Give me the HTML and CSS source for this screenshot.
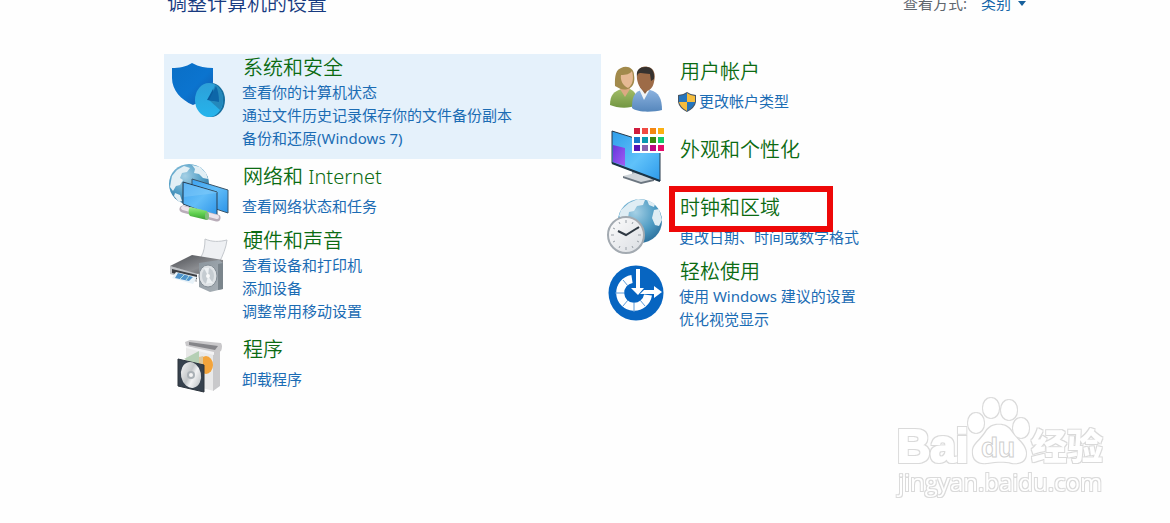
FILE: index.html
```html
<!DOCTYPE html>
<html lang="zh-CN">
<head>
<meta charset="utf-8">
<meta name="viewport" content="width=device-width, initial-scale=1">
<title>控制面板</title>
<link rel="stylesheet" href="styles.css">
</head>
<body>
<div class="page">
  <header class="header">
    <h1 class="heading">调整计算机的设置</h1>
    <div class="view-by">
      <label for="view">查看方式:</label>
      <span class="view-picker">
        <select id="view" class="view-select"><option>类别</option></select>
        <svg class="view-arrow" viewBox="0 0 8 5" aria-hidden="true"><path d="M0 0h8L4 5z" fill="#17609c"/></svg>
      </span>
    </div>
  </header>

  <main class="categories">
    <div class="column">
      <section class="item item-active">
        <svg class="icon" viewBox="0 0 68 68" aria-hidden="true">
          <defs>
            <linearGradient id="shield" x1="0" y1="0" x2="1" y2="1"><stop offset="0" stop-color="#0a6fc6"/><stop offset=".55" stop-color="#0b74cf"/><stop offset="1" stop-color="#1257a8"/></linearGradient>
            <linearGradient id="pie" x1="0" y1="0" x2="0" y2="1"><stop offset="0" stop-color="#2d9fd8"/><stop offset="1" stop-color="#25b4ec"/></linearGradient>
          </defs>
          <path d="M8 14c7 0 14-1 20-5 7 4 14 5 21 5v14c0 11-9 19-20 23C17 46 8 36 8 24z" fill="url(#shield)"/>
          <ellipse cx="47" cy="46" rx="14" ry="17" fill="#176f9f"/>
          <ellipse cx="45" cy="46" rx="14" ry="17" fill="url(#pie)"/>
          <path d="M45 46l6-15c5 3 8 8 8 14 0 4-1 8-3 11z" fill="#2488bb"/>
          <path d="M43 46l6-11 2 12z" fill="#0a5b9c"/><path d="M45 46l7-14c2 4 3 10 3 16z" fill="#0d66a8"/>
        </svg>
        <div class="text">
          <h2 class="title"><a href="#">系统和安全</a></h2>
          <ul class="links">
            <li><a href="#">查看你的计算机状态</a></li>
            <li><a href="#">通过文件历史记录保存你的文件备份副本</a></li>
            <li><a href="#">备份和还原(Windows 7)</a></li>
          </ul>
        </div>
      </section>

      <section class="item item-single">
        <svg class="icon" viewBox="0 0 68 68" aria-hidden="true">
          <defs>
            <radialGradient id="globe" cx=".4" cy=".3" r=".75"><stop offset="0" stop-color="#a5d0e5"/><stop offset=".6" stop-color="#4f9cc4"/><stop offset="1" stop-color="#2b6f9c"/></radialGradient>
            <linearGradient id="screen" x1="0" y1="0" x2="1" y2="1"><stop offset="0" stop-color="#3ea2f0"/><stop offset=".5" stop-color="#62bdf8"/><stop offset="1" stop-color="#2b93e8"/></linearGradient>
            <linearGradient id="plug" x1="0" y1="0" x2="0" y2="1"><stop offset="0" stop-color="#a2ec8c"/><stop offset=".5" stop-color="#5fd04f"/><stop offset="1" stop-color="#3a9c34"/></linearGradient>
          </defs>
          <circle cx="25" cy="25" r="20" fill="url(#globe)"/>
          <path d="M8 17l5-6 7-4 6 2-3 4-5 1-2 5 3 2-3 5-4 1-3 5-3-4 1-6zM28 6l8 2 6 6 2 6-5-1-4-4-5-1 1-4zM11 34l5 2 2 6-3 1-5-6z" fill="#e2eff5"/>
          <path d="M28 20l36 11v23l-36-12z" fill="url(#screen)" stroke="#3a5468"/>
          <path d="M19 23l34 10v25L19 45z" fill="url(#screen)" stroke="#283d50"/>
          <path d="M20 38l33-4v-1L20 24z" fill="#8dd0fb" opacity=".4"/>
          <path d="M19 50l34 9" stroke="#b9adb9" stroke-width="7" stroke-linecap="round"/>
          <path d="M19 49l34 9" stroke="#ece4ec" stroke-width="4" stroke-linecap="round"/>
          <path d="M26 48l17 4v9l-17-4q-3-5 0-9z" fill="url(#plug)"/>
          <ellipse cx="43" cy="57" rx="2" ry="4" fill="#83bd7d"/>
        </svg>
        <div class="text">
          <h2 class="title"><a href="#">网络和 Internet</a></h2>
          <ul class="links"><li><a href="#">查看网络状态和任务</a></li></ul>
        </div>
      </section>

      <section class="item">
        <svg class="icon" viewBox="0 0 68 68" aria-hidden="true">
          <defs>
            <linearGradient id="printer" x1="0" y1="0" x2="1" y2="1"><stop offset="0" stop-color="#4b4d52"/><stop offset=".6" stop-color="#8b8d91"/><stop offset="1" stop-color="#5c5e62"/></linearGradient>
            <linearGradient id="speaker" x1="0" y1="0" x2="1" y2="1"><stop offset="0" stop-color="#8b959d"/><stop offset="1" stop-color="#aab2b8"/></linearGradient>
          </defs>
          <path d="M41 12c7 3 14 3 22 1-1 8-4 15-8 23l-18-6c3-5 4-11 4-18z" fill="#eef0f3" stroke="#c3c7cc"/>
          <path d="M6 39l27 7v9L6 47z" fill="#c0c3c7"/>
          <path d="M6 39l22-11 31 5v5l-25 9z" fill="url(#printer)"/>
          <path d="M8 42l25 6v4L8 46z" fill="#3c3f44"/>
          <path d="M12 45l21 5-4 7-21-6z" fill="#e8f2f8"/><path d="M14 46l15 4-4 4-14-3z" fill="#4f93cb"/><path d="M20 48l-4 4M25 49l-3 4" stroke="#b5e0dc"/>
          <path d="M35 36l20-3 4 3v26l-13 3-11-5z" fill="url(#speaker)"/>
          <path d="M54 37l5-1v26l-5 1z" fill="#7b858c"/>
          <ellipse cx="44" cy="49" rx="9" ry="11" fill="#dfe3e6" stroke="#828c94"/>
          <ellipse cx="44" cy="49" rx="6" ry="8" fill="#c5ccd1"/><path d="M44 49l-4-8 5 0zM44 49l5 7-7 1z" fill="#edf1f3"/>
          <circle cx="44" cy="49" r="2" fill="#f8f9fa"/>
        </svg>
        <div class="text">
          <h2 class="title"><a href="#">硬件和声音</a></h2>
          <ul class="links">
            <li><a href="#">查看设备和打印机</a></li>
            <li><a href="#">添加设备</a></li>
            <li><a href="#">调整常用移动设置</a></li>
          </ul>
        </div>
      </section>

      <section class="item item-single">
        <svg class="icon" viewBox="0 0 68 68" aria-hidden="true">
          <defs><linearGradient id="disc" x1="0" y1="0" x2="1" y2="1"><stop offset="0" stop-color="#fafafa"/><stop offset=".45" stop-color="#c2c6c8"/><stop offset=".6" stop-color="#f2f3f4"/><stop offset="1" stop-color="#aeb4b8"/></linearGradient></defs>
          <path d="M22 14l28 7v38l-28-7z" fill="#e9e9e9"/>
          <path d="M49 21l7-3v36l-7 5z" fill="#c9c9cb"/>
          <path d="M21 10l5-2 31 3q2 3 0 8l-6 3-29-8z" fill="#c9c8ca"/>
          <path d="M25 10l29 4-3 4-26-5z" fill="#858589"/>
          <path d="M22 14l28 6v3l-28-7z" fill="#f3f3f4"/>
          <path d="M20 27l15-8v15z" fill="#b5cfb4"/><ellipse cx="42" cy="33" rx="7" ry="9" fill="#f3a43b"/><path d="M35 25l4-1v17h-4z" fill="#dcc69b"/>
          <path d="M14 27l26 6v27l-26-6z" fill="#36414d" stroke="#2c343d"/>
          <ellipse cx="27" cy="43" rx="10" ry="13" transform="rotate(-12 27 43)" fill="url(#disc)"/>
          <circle cx="27" cy="43" r="4" fill="#aab1b6"/><circle cx="27" cy="43" r="2" fill="#f5f5f5"/>
        </svg>
        <div class="text">
          <h2 class="title"><a href="#">程序</a></h2>
          <ul class="links"><li><a href="#">卸载程序</a></li></ul>
        </div>
      </section>
    </div>

    <div class="column">
      <section class="item item-single">
        <svg class="icon" viewBox="0 0 68 68" aria-hidden="true">
          <defs>
            <linearGradient id="green" x1="0" y1="0" x2="0" y2="1"><stop offset="0" stop-color="#a2bc68"/><stop offset="1" stop-color="#739743"/></linearGradient>
            <linearGradient id="blue" x1="0" y1="0" x2="0" y2="1"><stop offset="0" stop-color="#8cb2df"/><stop offset="1" stop-color="#5687bc"/></linearGradient>
          </defs>
          <path d="M9 51c0-10 4-14 12-16h8c6 3 7 7 7 16-8 4-20 3-27 0z" fill="url(#green)"/>
          <path d="M19 35l5 8 5-8-2-5h-6z" fill="#dca982"/>
          <path d="M14 32c0-4-1-16 6-18 6-3 13 0 13 7 1 5 0 11-4 13-6 3-10 1-15-2z" fill="#a28a4c"/>
          <path d="M20 21c5 0 9-1 11-4 2 7 1 14-4 17-5-2-8-8-7-13z" fill="#e5b993"/>
          <path d="M31 54c0-9 1-15 9-18h9c9 2 12 9 12 20-8 2-24 3-30-2z" fill="url(#blue)"/>
          <path d="M38 35l5 11 6-11-2-4h-7z" fill="#f0f3f5"/><path d="M39 33l5 7 5-7v-5h-9z" fill="#8d5e3b"/>
          <path d="M36 25c-1-10 5-14 11-12 6 1 8 7 6 15-1 6-5 9-8 9-5 0-8-6-9-12z" fill="#9d6b47"/>
          <path d="M36 22c-1-6 3-9 8-9 7-1 10 5 9 12l-3 2-1-7c-5 0-10-2-12 0z" fill="#36322f"/>
        </svg>
        <div class="text">
          <h2 class="title"><a href="#">用户帐户</a></h2>
          <ul class="links">
            <li><a class="admin-link" href="#"><svg class="uac" viewBox="0 0 20 20" aria-hidden="true"><path d="M1 3q5 0 9-3 4 3 9 3v7q-1 6-9 10-8-4-9-10z" fill="#475565"/><path d="M2 4q4 0 8-3v9H2z" fill="#2575bd"/><path d="M10 1q4 3 8 3v6h-8z" fill="#f5bd3d"/><path d="M2 10h8v9q-7-4-8-9z" fill="#f5bd3d"/><path d="M10 10h8q-1 5-8 9z" fill="#2575bd"/></svg>更改帐户类型</a></li>
          </ul>
        </div>
      </section>

      <section class="item item-plain">
        <svg class="icon" viewBox="0 0 68 68" aria-hidden="true">
          <defs>
            <linearGradient id="desk" x1="0" y1="0" x2="1" y2="1"><stop offset="0" stop-color="#2e9dea"/><stop offset=".55" stop-color="#60c2fa"/><stop offset="1" stop-color="#2d9aeb"/></linearGradient>
            <linearGradient id="violet" x1="0" y1="0" x2="1" y2="1"><stop offset="0" stop-color="#6636dc"/><stop offset="1" stop-color="#a15ef3"/></linearGradient>
          </defs>
          <path d="M31 48l9 3v6h-9z" fill="#9da8b1"/>
          <path d="M22 54l12-3 19 6-13 4z" fill="#cfd5da"/><path d="M22 54l18 6 13-3v2l-13 3-18-6z" fill="#6c7680"/>
          <path d="M11 9l48 15v35L11 41z" fill="url(#desk)" stroke="#26394a"/>
          <path d="M12 23l12 3v18l-12-4z" fill="url(#violet)"/>
          <path d="M11 41l48 18" stroke="#1b3447" stroke-width="2"/>
          <path d="M31 5h34v26H31z" fill="#fff"/>
          <path d="M33 6h6v6h-6z" fill="#d01c3d"/><path d="M41 6h6v6h-6z" fill="#f04a43"/><path d="M49 6h6v6h-6z" fill="#f48712"/><path d="M57 6h6v6h-6z" fill="#fbb012"/>
          <path d="M33 15h6v6h-6z" fill="#1777ca"/><path d="M41 15h6v6h-6z" fill="#0b99af"/><path d="M49 15h6v6h-6z" fill="#3c8710"/><path d="M57 15h6v6h-6z" fill="#13ca69"/>
          <path d="M33 23h6v6h-6z" fill="#5413b4"/><path d="M41 23h6v6h-6z" fill="#8965ae"/><path d="M49 23h6v6h-6z" fill="#be0781"/><path d="M57 23h6v6h-6z" fill="#e60c69"/>
        </svg>
        <div class="text"><h2 class="title"><a href="#">外观和个性化</a></h2></div>
      </section>

      <section class="item item-single item-marked">
        <svg class="icon" viewBox="0 0 68 68" aria-hidden="true">
          <defs><linearGradient id="face" x1="0" y1="0" x2="1" y2="1"><stop offset="0" stop-color="#fdfdfd"/><stop offset="1" stop-color="#d9dde2"/></linearGradient></defs>
          <circle cx="39" cy="31" r="22" fill="url(#globe)"/>
          <path d="M20 20l8-7 9-4 7 1-2 5-6 1-3 5-5 1-1 6-5 2-4-4zM46 10l8 4-1 3-5-2zM53 20l5-1 3 11-3 6-4-1-3-7z" fill="#dfedf4"/>
          <circle cx="25" cy="45" r="18" fill="url(#face)" stroke="#a3aab1" stroke-width="2"/>
          <path d="M25 30v3M25 57v3M10 45h3M37 45h3M32 32l-1 2M38 38l-2 1M38 52l-2-1M32 58l-1-2M18 58l1-2M12 52l2-1M12 38l2 1M18 32l1 2" stroke="#9aa1a8"/>
          <path d="M17 41l8 4 13-8" fill="none" stroke="#2f3943" stroke-width="2"/>
        </svg>
        <div class="text">
          <h2 class="title"><a href="#">时钟和区域</a></h2>
          <ul class="links"><li><a href="#">更改日期、时间或数字格式</a></li></ul>
        </div>
        <span class="marker"></span>
      </section>

      <section class="item">
        <svg class="icon" viewBox="0 0 68 68" aria-hidden="true">
          <circle cx="35" cy="35" r="27.500" fill="#0765c1"/>
          <path d="M31 21a14 14 0 1 0 16 16" fill="none" stroke="#fff" stroke-width="8"/>
          <path d="M22 22l5 6M14 35h9M22 48l5-6M33 54v-9M44 48l-5-6" stroke="#5c9bd8"/>
          <path d="M34 10h6v18h5L36 40 26 29h8z" fill="#0765c1"/>
          <path d="M35 11h4v19h4l-6 7-7-7h5z" fill="#fff"/>
          <path d="M39 36l4-4h10v-4l8 6-8 6v-4z" fill="#fff"/>
        </svg>
        <div class="text">
          <h2 class="title"><a href="#">轻松使用</a></h2>
          <ul class="links">
            <li><a href="#">使用 Windows 建议的设置</a></li>
            <li><a href="#">优化视觉显示</a></li>
          </ul>
        </div>
      </section>
    </div>
  </main>

  <svg class="watermark" viewBox="0 0 220 108" aria-label="Baidu 经验">
    <defs>
      <filter id="outline" x="-5%" y="-5%" width="110%" height="115%">
        <feMorphology in="SourceAlpha" operator="dilate" radius="1" result="grown"/>
        <feFlood flood-color="#dadada"/>
        <feComposite in2="grown" operator="in"/>
        <feMerge><feMergeNode/><feMergeNode in="SourceGraphic"/></feMerge>
      </filter>
    </defs>
    <g class="wm-shape" filter="url(#outline)">
      <text class="wm-bai" x="7" y="67">Bai</text>
      <ellipse cx="86" cy="28" rx="8" ry="10"/><ellipse cx="101" cy="13" rx="8" ry="10"/><ellipse cx="119" cy="15" rx="8" ry="10"/><ellipse cx="131" cy="33" rx="8" ry="10"/>
      <path d="M83 55c1-6 8-10 13-18 5-9 19-10 25-1 5 8 14 13 15 22 0 8-6 11-14 10-8-2-17-1-25 0-9 1-15-4-14-13z"/>
      <text class="wm-cn" x="141" y="65">经验</text>
      <text class="wm-url" x="8" y="96">jingyan.baidu.com</text>
    </g>
    <text class="wm-du" x="91" y="62">du</text>
  </svg>
</div>
</body>
</html>
```
FILE: styles.css
```css
* {
  box-sizing: border-box;
}

body {
  margin: 0;
  background: #fefefe;
  font-family: "Noto Sans", "Noto Sans CJK SC", sans-serif;
  font-size: 15px;
  line-height: 23px;
}

a {
  color: inherit;
  text-decoration: none;
}

a:hover {
  text-decoration: underline;
}

.page {
  position: relative;
  min-height: 100vh;
  padding-left: 164px;
  overflow: hidden;
}

.header {
  display: flex;
  align-items: center;
  justify-content: space-between;
  max-width: 874px;
  margin-top: -10px;
  padding: 0 12px 0 3px;
}

.heading {
  margin: 0;
  color: #173a80;
  font-size: 20px;
  font-weight: 350;
  line-height: 27px;
}

.view-by {
  display: flex;
  gap: 14px;
  color: #5f666d;
}

.view-picker {
  display: flex;
  align-items: center;
  gap: 6px;
}

.view-select {
  appearance: none;
  padding: 0;
  border: 0;
  background: none;
  color: #1565a8;
  font: inherit;
}

.view-arrow {
  width: 8px;
  height: 5px;
}

.categories {
  display: grid;
  grid-template-columns: 1fr 1fr;
  align-items: start;
  max-width: 874px;
  margin-top: 37px;
}

.item {
  position: relative;
  display: flex;
  align-items: flex-start;
  gap: 10px;
  padding-bottom: 9px;
}

.item-active {
  background: #e5f1fb;
}

.icon {
  flex: none;
  width: 68px;
  height: 68px;
  margin-bottom: -9px;
}

.title {
  margin: 0;
  padding-left: 1px;
  color: #0b6b12;
  font-size: 20px;
  font-weight: 350;
  line-height: 27px;
}

.links {
  margin: 0;
  padding: 0;
  color: #1b6cb4;
  list-style: none;
}

.item-single .text {
  padding-top: 4px;
}

.item-single .links {
  padding-top: 5px;
}

.item-plain .text {
  padding-top: 14px;
}

.admin-link {
  display: flex;
  align-items: center;
  margin-left: -2px;
  gap: 2px;
}

.uac {
  width: 20px;
  height: 20px;
}

.marker {
  position: absolute;
  top: -4px;
  left: 68px;
  width: 164px;
  height: 46px;
  border: 6px solid #ee0808;
  pointer-events: none;
}

.watermark {
  position: absolute;
  right: 60px;
  bottom: 20px;
  width: 220px;
  height: 108px;
  pointer-events: none;
}

.wm-shape {
  fill: #fff;
}

.wm-bai {
  font-family: "Liberation Sans", sans-serif;
  font-size: 46px;
  font-weight: 700;
  stroke: #fff;
  stroke-width: 2px;
}

.wm-du {
  fill: #fff;
  stroke: #cfcfcf;
  stroke-width: 1px;
  font-family: "Liberation Sans", sans-serif;
  font-size: 28px;
  font-weight: 700;
}

.wm-cn {
  font-family: "Noto Sans CJK SC", sans-serif;
  font-size: 36px;
  font-weight: 900;
}

.wm-url {
  font-family: "Open Sans", sans-serif;
  font-size: 24px;
  font-weight: 500;
}
```
